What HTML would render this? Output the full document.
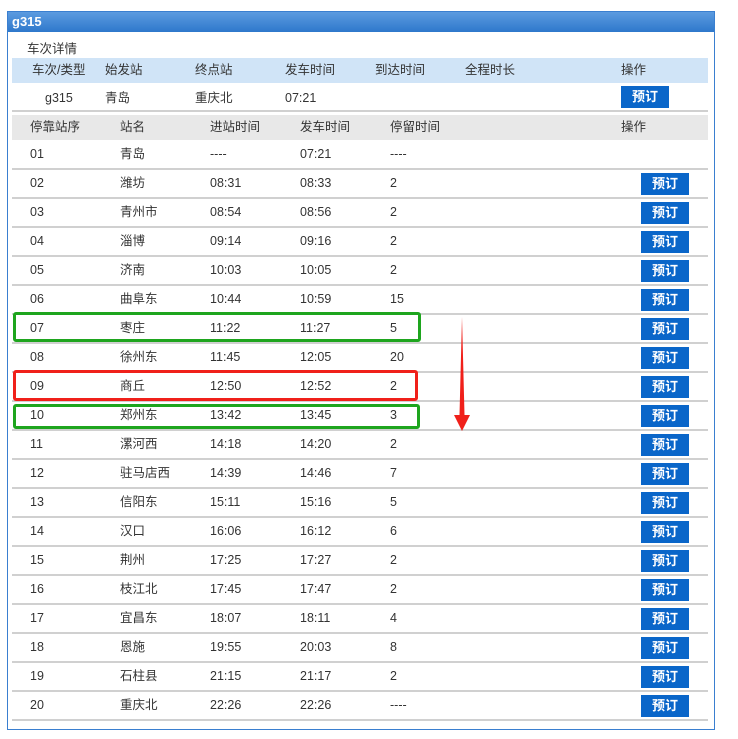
<!DOCTYPE html>
<html><head><meta charset="utf-8"><style>
*{margin:0;padding:0;box-sizing:border-box}
body{width:738px;height:739px;background:#fff;position:relative;font-family:"Liberation Sans","Noto Sans CJK SC",sans-serif;font-size:12.5px;color:#333;overflow:hidden}
.a{position:absolute;white-space:nowrap;height:16px;line-height:16px}
.panel{position:absolute;left:7px;top:11px;width:708px;height:719px;border:1px solid #3a7fd0}
.bar{position:absolute;left:8px;top:12px;width:706px;height:20px;background:linear-gradient(#5c9be0,#2e78cc);color:#fff;font-weight:bold;font-size:13px;padding:0 4px;line-height:20px}
.hb{position:absolute;left:12px;width:696px;height:25px}
.ln{position:absolute;left:12px;width:696px;height:2px;background:#d0d0d0}
.btn{position:absolute;width:48px;height:22px;background:#0a66c9;color:#fff;font-size:13px;font-weight:bold;text-align:center;line-height:22px}
.box{position:absolute;border:3px solid #1ea51e;border-radius:3px}
</style></head><body>
<div class="panel"></div>
<div class="bar">g315</div>
<div class="a" style="left:27px;top:41px">车次详情</div>
<div class="hb" style="top:58px;background:#d0e4f7"></div>
<div class="a" style="left:32px;top:62px">车次/类型</div>
<div class="a" style="left:105px;top:62px">始发站</div>
<div class="a" style="left:195px;top:62px">终点站</div>
<div class="a" style="left:285px;top:62px">发车时间</div>
<div class="a" style="left:375px;top:62px">到达时间</div>
<div class="a" style="left:465px;top:62px">全程时长</div>
<div class="a" style="left:621px;top:62px">操作</div>
<div class="a" style="left:45px;top:90px">g315</div>
<div class="a" style="left:105px;top:90px">青岛</div>
<div class="a" style="left:195px;top:90px">重庆北</div>
<div class="a" style="left:285px;top:90px">07:21</div>
<div class="btn" style="left:621px;top:86px">预订</div>
<div class="ln" style="top:110px"></div>
<div class="hb" style="top:115px;background:#e8e8e8"></div>
<div class="a" style="left:30px;top:119px">停靠站序</div>
<div class="a" style="left:120px;top:119px">站名</div>
<div class="a" style="left:210px;top:119px">进站时间</div>
<div class="a" style="left:300px;top:119px">发车时间</div>
<div class="a" style="left:390px;top:119px">停留时间</div>
<div class="a" style="left:621px;top:119px">操作</div>
<div id="rows"></div>
<div class="box" style="left:13px;top:312px;width:408px;height:30px"></div>
<div class="box" style="left:13px;top:370px;width:405px;height:31px;border-color:#f0201a"></div>
<div class="box" style="left:13px;top:404px;width:407px;height:25px"></div>
<svg style="position:absolute;left:450px;top:315px" width="25" height="120"><polygon points="12,2 14.5,100 20,100 12,116 4,100 9.5,100" fill="#f0201a"/></svg>
<script>
var d=[["01","青岛","----","07:21","----"],["02","潍坊","08:31","08:33","2"],["03","青州市","08:54","08:56","2"],["04","淄博","09:14","09:16","2"],["05","济南","10:03","10:05","2"],["06","曲阜东","10:44","10:59","15"],["07","枣庄","11:22","11:27","5"],["08","徐州东","11:45","12:05","20"],["09","商丘","12:50","12:52","2"],["10","郑州东","13:42","13:45","3"],["11","漯河西","14:18","14:20","2"],["12","驻马店西","14:39","14:46","7"],["13","信阳东","15:11","15:16","5"],["14","汉口","16:06","16:12","6"],["15","荆州","17:25","17:27","2"],["16","枝江北","17:45","17:47","2"],["17","宜昌东","18:07","18:11","4"],["18","恩施","19:55","20:03","8"],["19","石柱县","21:15","21:17","2"],["20","重庆北","22:26","22:26","----"]];
var h="",xs=[30,120,210,300,390];
d.forEach(function(r,i){var t=140+i*29;
r.forEach(function(c,j){h+='<div class="a" style="left:'+xs[j]+'px;top:'+(t+6)+'px">'+c+'</div>'});
if(i>0)h+='<div class="btn" style="left:641px;top:'+(t+4)+'px">预订</div>';
h+='<div class="ln" style="top:'+(t+28)+'px"></div>';});
document.getElementById("rows").innerHTML=h;
</script>
</body></html>
